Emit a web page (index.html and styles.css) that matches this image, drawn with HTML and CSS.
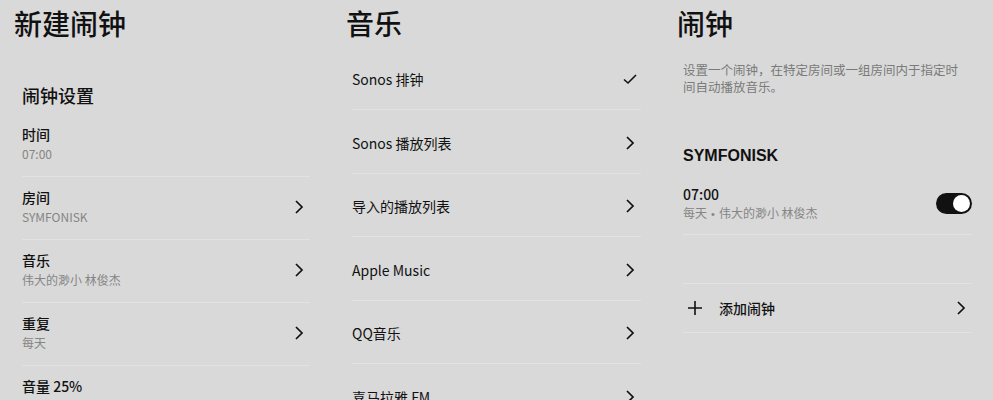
FILE: index.html
```html
<!DOCTYPE html>
<html lang="zh-CN">
<head>
  <meta charset="UTF-8">
  <title>闹钟</title>
  <link rel="stylesheet" href="styles.css">
</head>
<body>
  <div class="page">

    <section class="col">
      <h1 class="title">新建闹钟</h1>
      <h2 class="group">闹钟设置</h2>
      <div class="row">
        <div class="text">
          <div class="label">时间</div>
          <div class="sub">07:00</div>
        </div>
      </div>
      <div class="row">
        <div class="text">
          <div class="label">房间</div>
          <div class="sub">SYMFONISK</div>
        </div>
        <svg class="chev" width="10" height="16" viewBox="0 0 10 16"><path d="M2 2 L8 8 L2 14" fill="none" stroke="#111" stroke-width="1.7"/></svg>
      </div>
      <div class="row">
        <div class="text">
          <div class="label">音乐</div>
          <div class="sub">伟大的渺小 林俊杰</div>
        </div>
        <svg class="chev" width="10" height="16" viewBox="0 0 10 16"><path d="M2 2 L8 8 L2 14" fill="none" stroke="#111" stroke-width="1.7"/></svg>
      </div>
      <div class="row">
        <div class="text">
          <div class="label">重复</div>
          <div class="sub">每天</div>
        </div>
        <svg class="chev" width="10" height="16" viewBox="0 0 10 16"><path d="M2 2 L8 8 L2 14" fill="none" stroke="#111" stroke-width="1.7"/></svg>
      </div>
      <div class="row">
        <div class="text">
          <div class="label">音量 25%</div>
        </div>
      </div>
    </section>

    <section class="col">
      <h1 class="title">音乐</h1>
      <div class="list">
        <div class="item">
          <span>Sonos 排钟</span>
          <svg class="check" width="16" height="12" viewBox="0 0 16 12"><path d="M2 6.5 L6 10 L14 2" fill="none" stroke="#111" stroke-width="1.6"/></svg>
        </div>
        <div class="item">
          <span>Sonos 播放列表</span>
          <svg class="chev" width="10" height="16" viewBox="0 0 10 16"><path d="M2 2 L8 8 L2 14" fill="none" stroke="#111" stroke-width="1.7"/></svg>
        </div>
        <div class="item">
          <span>导入的播放列表</span>
          <svg class="chev" width="10" height="16" viewBox="0 0 10 16"><path d="M2 2 L8 8 L2 14" fill="none" stroke="#111" stroke-width="1.7"/></svg>
        </div>
        <div class="item">
          <span>Apple Music</span>
          <svg class="chev" width="10" height="16" viewBox="0 0 10 16"><path d="M2 2 L8 8 L2 14" fill="none" stroke="#111" stroke-width="1.7"/></svg>
        </div>
        <div class="item">
          <span>QQ音乐</span>
          <svg class="chev" width="10" height="16" viewBox="0 0 10 16"><path d="M2 2 L8 8 L2 14" fill="none" stroke="#111" stroke-width="1.7"/></svg>
        </div>
        <div class="item">
          <span>喜马拉雅 FM</span>
          <svg class="chev" width="10" height="16" viewBox="0 0 10 16"><path d="M2 2 L8 8 L2 14" fill="none" stroke="#111" stroke-width="1.7"/></svg>
        </div>
      </div>
    </section>

    <section class="col">
      <h1 class="title">闹钟</h1>
      <p class="desc">设置一个闹钟，在特定房间或一组房间内于指定时间自动播放音乐。</p>
      <h3 class="room">SYMFONISK</h3>
      <div class="alarm">
        <div class="text">
          <div class="label">07:00</div>
          <div class="sub">每天<span class="dot">•</span>伟大的渺小 林俊杰</div>
        </div>
        <div class="toggle"><div class="knob"></div></div>
      </div>
      <div class="add">
        <svg class="plus" width="16" height="16" viewBox="0 0 16 16"><path d="M8 1 V15 M1 8 H15" stroke="#111" stroke-width="1.6"/></svg>
        <span class="add-label">添加闹钟</span>
        <svg class="chev" width="10" height="16" viewBox="0 0 10 16"><path d="M2 2 L8 8 L2 14" fill="none" stroke="#111" stroke-width="1.7"/></svg>
      </div>
    </section>

  </div>
</body>
</html>
```

FILE: styles.css
```css
html, body { margin: 0; height: 100%; }
body { background: #d9d9d9; color: #111; font-family: "Noto Sans CJK SC", "Liberation Sans", sans-serif; overflow: hidden; }
.page { display: grid; grid-template-columns: 331px 331px 331px; }
.col { padding: 0 21px 0 21px; }
.col:first-child { padding-left: 22px; }

.title { font-size: 28px; font-weight: 500; line-height: 36px; margin: 5px 0 0 -6px; }
.col:first-child .title { margin-left: -8px; }

.group { font-size: 18px; font-weight: 500; line-height: 24px; margin: 42px 0 7px; }

.row { display: flex; align-items: center; padding: 10px 0 12px; border-bottom: 1px solid #e2e2e2; }
.text { flex: 1; }
.label { font-size: 14px; font-weight: 500; line-height: 20px; }
.sub { font-size: 12px; line-height: 20px; color: #858585; }
.chev { margin-right: 6px; flex: none; }

.list { margin-top: 6px; }
.item { display: flex; align-items: center; justify-content: space-between; font-size: 14px; line-height: 20px; padding: 22.5px 0 20px; border-bottom: 1px solid #e2e2e2; }
.item:first-child { padding-top: 22px; }
.check { margin-right: 3px; }

.desc { font-size: 12.5px; line-height: 17px; color: #7a7a7a; margin: 20px 0 0; max-width: 280px; }
.room { font-size: 16px; font-weight: 700; line-height: 22px; margin: 50px 0 0; font-family: "Liberation Sans", sans-serif; }
.alarm { display: flex; align-items: center; padding: 17px 0 11px; border-bottom: 1px solid #e2e2e2; }
.alarm .sub { line-height: 18px; font-size: 12px; }
.dot { font-family: "Liberation Sans", sans-serif; font-size: 11px; margin: 0 4px; }
.toggle { width: 36px; height: 21px; border-radius: 11px; background: #111; display: flex; align-items: center; justify-content: flex-end; padding: 0 2px; box-sizing: border-box; }
.knob { width: 17px; height: 17px; border-radius: 50%; background: #fff; }

.add { display: flex; align-items: center; height: 48px; margin-top: 48px; border-top: 1px solid #e2e2e2; border-bottom: 1px solid #e2e2e2; }
.plus { margin-left: 4px; }
.add-label { flex: 1; font-size: 14px; font-weight: 500; margin-left: 16px; }
```
